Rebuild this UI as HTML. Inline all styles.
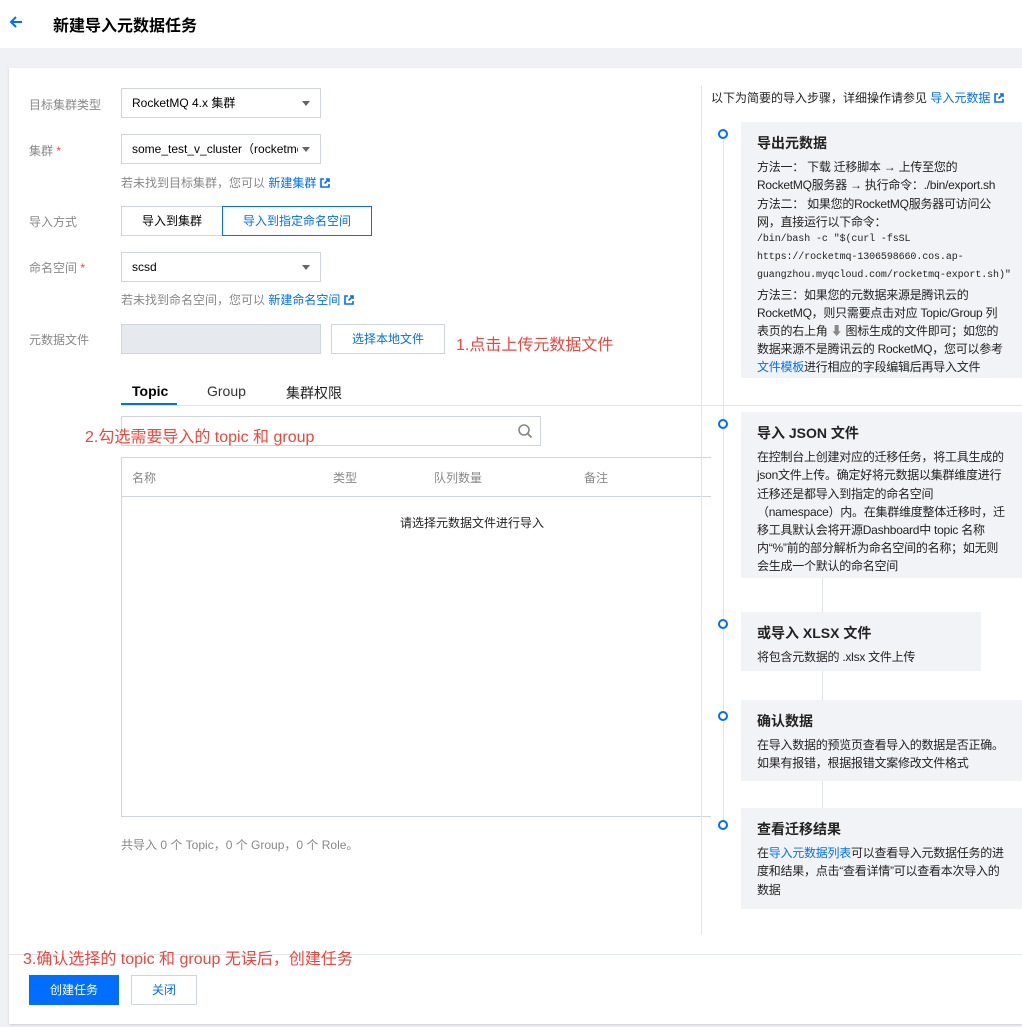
<!DOCTYPE html>
<html><head><meta charset="utf-8"><style>
*{margin:0;padding:0;box-sizing:border-box}
body{width:1022px;height:1027px;background:#f0f1f4;font-family:"Liberation Sans","Noto Sans CJK SC",sans-serif;font-size:12px;color:#000;position:relative;overflow:hidden}
.a{position:absolute;white-space:nowrap}
.hdr{left:0;top:0;width:1022px;height:48px;background:#fff}
.card{left:9px;top:68px;width:1013px;height:956px;background:#fff;box-shadow:0 1px 2px rgba(0,0,0,.15)}
.lbl{color:#888;left:29px}
.sel{left:121px;width:200px;height:30px;border:1px solid #cfd5de;padding:0 10px;line-height:28px;background:#fff;overflow:hidden}
.sel:after{content:"";position:absolute;right:10px;top:12px;border:4px solid transparent;border-top:5px solid #666}
.hint{color:#888;left:121px}
.lk{color:#006eff}
.ext{display:inline-block;width:10px;height:10px;margin-left:4px;vertical-align:-1px}
.red{color:#f0453a;font-size:16px}
.box{left:741px;background:#f2f3f6;padding:10px 14px 10px 16px;font-size:12px;line-height:18.2px;color:#222;white-space:normal;letter-spacing:-0.25px}
.box b{display:block;font-size:14px;margin-bottom:6px;margin-top:2px;letter-spacing:0}
.dot{width:10px;height:10px;border:2px solid #006eff;border-radius:50%;left:718px;background:#fff}
.mono{display:block;font-family:"Liberation Mono","Noto Serif CJK SC",monospace;font-size:10px;letter-spacing:-0.1px;white-space:nowrap;line-height:18.2px;height:18.2px}
</style></head><body>
<div class="a hdr"></div>
<svg class="a" style="left:8px;top:14px" width="16" height="16" viewBox="0 0 16 16"><path d="M14 8H3M8 3L3 8l5 5" stroke="#006eff" stroke-width="2" fill="none"/></svg>
<div class="a" style="left:53px;top:12px;font-size:16px;font-weight:bold;color:#000">新建导入元数据任务</div>
<div class="a card"></div>

<div class="a lbl" style="top:96px">目标集群类型</div>
<div class="a sel" style="top:88px">RocketMQ 4.x 集群</div>
<div class="a lbl" style="top:142px">集群 <span style="color:#e54545">*</span></div>
<div class="a sel" style="top:134px"><div style="width:166px;overflow:hidden">some_test_v_cluster（rocketmq</div></div>
<div class="a hint" style="top:174px">若未找到目标集群，您可以 <span class="lk">新建集群</span><svg class="ext" viewBox="0 0 10 10"><path d="M4 1H1v8h8V6M6 1h3v3M9 1L4.5 5.5" stroke="#006eff" stroke-width="1.6" fill="none"/></svg></div>
<div class="a lbl" style="top:213px">导入方式</div>
<div class="a" style="left:121px;top:206px;width:102px;height:30px;border:1px solid #cfd5de;text-align:center;line-height:28px">导入到集群</div>
<div class="a" style="left:222px;top:206px;width:150px;height:30px;border:1px solid #006eff;text-align:center;line-height:28px;color:#006eff">导入到指定命名空间</div>
<div class="a lbl" style="top:259px">命名空间 <span style="color:#e54545">*</span></div>
<div class="a sel" style="top:252px">scsd</div>
<div class="a hint" style="top:291px">若未找到命名空间，您可以 <span class="lk">新建命名空间</span><svg class="ext" viewBox="0 0 10 10"><path d="M4 1H1v8h8V6M6 1h3v3M9 1L4.5 5.5" stroke="#006eff" stroke-width="1.6" fill="none"/></svg></div>
<div class="a lbl" style="top:331px">元数据文件</div>
<div class="a" style="left:121px;top:324px;width:200px;height:30px;background:#e6e9ee;border:1px solid #cfd5de"></div>
<div class="a" style="left:331px;top:324px;width:114px;height:30px;border:1px solid #cfd5de;text-align:center;line-height:28px;color:#006eff">选择本地文件</div>
<div class="a red" style="left:456px;top:331px">1.点击上传元数据文件</div>

<div class="a" style="left:121px;top:405px;width:901px;height:1px;background:#dfe3ea"></div>
<div class="a" style="left:132px;top:383px;font-size:14px;font-weight:bold">Topic</div>
<div class="a" style="left:121px;top:403px;width:56px;height:2px;background:#006eff"></div>
<div class="a" style="left:207px;top:383px;font-size:14px;color:#333">Group</div>
<div class="a" style="left:286px;top:383px;font-size:14px;color:#222">集群权限</div>
<div class="a" style="left:121px;top:416px;width:420px;height:30px;border:1px solid #cfd5de"></div>
<svg class="a" style="left:517px;top:423px" width="16" height="16" viewBox="0 0 16 16"><circle cx="7" cy="7" r="5" stroke="#888" stroke-width="1.6" fill="none"/><path d="M11 11l3.5 3.5" stroke="#888" stroke-width="1.8"/></svg>
<div class="a red" style="left:85px;top:423px">2.勾选需要导入的 topic 和 group</div>

<div class="a" style="left:121px;top:457px;width:590px;height:360px;border:1px solid #cfd5de;border-right:none"></div>
<div class="a" style="left:121px;top:496px;width:590px;height:1px;background:#cfd5de"></div>
<div class="a" style="left:132px;top:469px;color:#888">名称</div>
<div class="a" style="left:333px;top:469px;color:#888">类型</div>
<div class="a" style="left:434px;top:469px;color:#888">队列数量</div>
<div class="a" style="left:584px;top:469px;color:#888">备注</div>
<div class="a" style="left:400px;top:514px;color:#222">请选择元数据文件进行导入</div>
<div class="a" style="left:121px;top:836px;color:#888">共导入 0 个 Topic，0 个 Group，0 个 Role。</div>

<div class="a" style="left:701px;top:85px;width:1px;height:850px;background:#e3e6eb"></div>
<div class="a" style="left:711px;top:89px;color:#222">以下为简要的导入步骤，详细操作请参见 <span class="lk">导入元数据</span><svg class="ext" viewBox="0 0 10 10"><path d="M4 1H1v8h8V6M6 1h3v3M9 1L4.5 5.5" stroke="#006eff" stroke-width="1.6" fill="none"/></svg></div>
<div class="a" style="left:723px;top:140px;width:1px;height:690px;background:#dfe3ea"></div>
<div class="a" style="left:822px;top:578px;width:1px;height:230px;background:#dfe3ea"></div>

<div class="a box" style="top:122px;width:281px;height:256px"><b>导出元数据</b>方法一： 下载 迁移脚本 → 上传至您的 RocketMQ服务器 → 执行命令：./bin/export.sh 方法二： 如果您的RocketMQ服务器可访问公网，直接运行以下命令：<span class="mono">/bin/bash -c "$(curl -fsSL</span><span class="mono">https://rocketmq-1306598660.cos.ap-</span><span class="mono">guangzhou.myqcloud.com/rocketmq-export.sh)"</span>方法三：如果您的元数据来源是腾讯云的 RocketMQ，则只需要点击对应 Topic/Group 列表页的右上角 <span style="color:#888">⬇</span> 图标生成的文件即可；如您的数据来源不是腾讯云的 RocketMQ，您可以参考<span class="lk">文件模板</span>进行相应的字段编辑后再导入文件</div>
<div class="a box" style="top:412px;width:281px;height:166px"><b>导入 JSON 文件</b>在控制台上创建对应的迁移任务，将工具生成的json文件上传。确定好将元数据以集群维度进行迁移还是都导入到指定的命名空间（namespace）内。在集群维度整体迁移时，迁移工具默认会将开源Dashboard中 topic 名称内“%”前的部分解析为命名空间的名称；如无则会生成一个默认的命名空间</div>
<div class="a box" style="top:612px;width:240px;height:59px"><b>或导入 XLSX 文件</b>将包含元数据的 .xlsx 文件上传</div>
<div class="a box" style="top:700px;width:281px;height:81px"><b>确认数据</b>在导入数据的预览页查看导入的数据是否正确。如果有报错，根据报错文案修改文件格式</div>
<div class="a box" style="top:808px;width:281px;height:101px"><b>查看迁移结果</b>在<span class="lk">导入元数据列表</span>可以查看导入元数据任务的进度和结果，点击“查看详情”可以查看本次导入的数据</div>
<div class="a dot" style="top:129px"></div>
<div class="a dot" style="top:419px"></div>
<div class="a dot" style="top:619px"></div>
<div class="a dot" style="top:711px"></div>
<div class="a dot" style="top:820px"></div>

<div class="a" style="left:9px;top:954px;width:1013px;height:1px;background:#e3e6eb"></div>
<div class="a red" style="left:23px;top:945px">3.确认选择的 topic 和 group 无误后，创建任务</div>
<div class="a" style="left:29px;top:975px;width:90px;height:30px;background:#006eff;color:#fff;text-align:center;line-height:30px">创建任务</div>
<div class="a" style="left:131px;top:975px;width:66px;height:30px;border:1px solid #cfd5de;color:#006eff;text-align:center;line-height:28px">关闭</div>
</body></html>
